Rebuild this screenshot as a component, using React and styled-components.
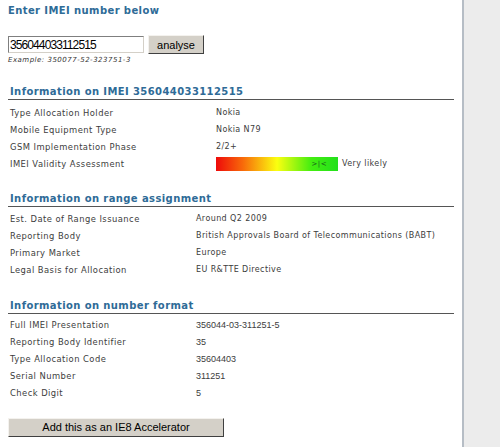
import React from "react";
import styled, { createGlobalStyle } from "styled-components";

const Global = createGlobalStyle`
  html, body { margin: 0; padding: 0; background: #fff; }
  body { width: 500px; height: 447px; overflow: hidden; }
`;

const Page = styled.div`
  display: flex;
  width: 500px;
  height: 447px;
`;

const Main = styled.div`
  width: 446px;
  padding: 0 8px;
  background: #fff;
  font-family: "DejaVu Sans", Verdana, sans-serif;
`;

const Side = styled.div`
  flex: 1;
  border-left: 2px solid #b6bdc5;
  background: #ececec;
`;

const Title = styled.div`
  margin-top: 5px;
  height: 14px;
  font-size: 10px;
  font-weight: bold;
  letter-spacing: 0.4px;
  color: #2e6b97;
`;

const Form = styled.div`
  display: flex;
  align-items: center;
  gap: 4px;
  margin-top: 16px;
`;

const Input = styled.input`
  box-sizing: border-box;
  width: 136px;
  height: 17px;
  padding: 0 1px;
  border: 1px solid #7f7f7f;
  border-right-color: #d4d0c8;
  border-bottom-color: #d4d0c8;
  font-family: "Liberation Sans", Arial, sans-serif;
  font-size: 12px;
  letter-spacing: -0.9px;
  color: #000;
  outline: none;
`;

const Button = styled.button`
  box-sizing: border-box;
  width: ${(p) => p.$w}px;
  height: ${(p) => p.$h}px;
  padding: 0;
  background: #d4d0c8;
  border: 1px solid;
  border-color: #f4f2ee #404040 #404040 #f4f2ee;
  font-family: "Liberation Sans", Arial, sans-serif;
  font-size: 11px;
  color: #000;
`;

const Example = styled.div`
  margin-top: 2px;
  font-size: 7px;
  font-style: italic;
  letter-spacing: 0.5px;
  color: #333;
`;

const Section = styled.div`
  margin-top: ${(p) => p.$top}px;
`;

const SectionHead = styled.div`
  padding-left: 2px;
  padding-bottom: 1px;
  border-bottom: 1px solid #555;
  font-size: 10px;
  font-weight: bold;
  letter-spacing: 0.4px;
  color: #2e6b97;
  line-height: 13px;
`;

const Rows = styled.div`
  margin-top: ${(p) => p.$gap}px;
  padding-left: 2px;
`;

const Row = styled.div`
  display: grid;
  grid-template-columns: ${(p) => p.$col}px 1fr;
  align-items: center;
  height: 17px;
  font-size: 8.4px;
  letter-spacing: 0.45px;
  color: #3c3c3c;
`;

const Value = styled.div`
  display: flex;
  align-items: center;
  gap: 4px;
  font-family: ${(p) => (p.$arial ? '"Liberation Sans", Arial, sans-serif' : "inherit")};
  font-size: ${(p) => (p.$arial ? "9px" : "8px")};
  letter-spacing: ${(p) => (p.$arial ? "0" : "0.4px")};
`;

const Bar = styled.div`
  display: flex;
  align-items: center;
  justify-content: flex-end;
  box-sizing: border-box;
  width: 122px;
  height: 14px;
  padding-right: 11px;
  background: linear-gradient(to right, #ee0a0a 0%, #f86a0a 22%, #fbff10 50%, #44ee10 78%, #22e01c 100%);
  font-size: 7px;
  letter-spacing: 0.5px;
  color: #1a5a1a;
`;

const Footer = styled.div`
  margin-top: 15px;
`;

const rows1 = [
  ["Type Allocation Holder", "Nokia"],
  ["Mobile Equipment Type", "Nokia N79"],
  ["GSM Implementation Phase", "2/2+"],
];
const rows2 = [
  ["Est. Date of Range Issuance", "Around Q2 2009"],
  ["Reporting Body", "British Approvals Board of Telecommunications (BABT)"],
  ["Primary Market", "Europe"],
  ["Legal Basis for Allocation", "EU R&TTE Directive"],
];
const rows3 = [
  ["Full IMEI Presentation", "356044-03-311251-5"],
  ["Reporting Body Identifier", "35"],
  ["Type Allocation Code", "35604403"],
  ["Serial Number", "311251"],
  ["Check Digit", "5"],
];

export default function App() {
  return (
    <>
      <Global />
      <Page>
        <Main>
          <Title>Enter IMEI number below</Title>
          <Form>
            <Input defaultValue="356044033112515" />
            <Button $w={56} $h={19}>analyse</Button>
          </Form>
          <Example>Example: 350077-52-323751-3</Example>

          <Section $top={21}>
            <SectionHead>Information on IMEI 356044033112515</SectionHead>
            <Rows $gap={4}>
              {rows1.map(([k, v]) => (
                <Row key={k} $col={206}>
                  <div>{k}</div>
                  <Value>{v}</Value>
                </Row>
              ))}
              <Row $col={206}>
                <div>IMEI Validity Assessment</div>
                <Value>
                  <Bar>&gt;|&lt;</Bar>
                  <span>Very likely</span>
                </Value>
              </Row>
            </Rows>
          </Section>

          <Section $top={20}>
            <SectionHead>Information on range assignment</SectionHead>
            <Rows $gap={3}>
              {rows2.map(([k, v]) => (
                <Row key={k} $col={186}>
                  <div>{k}</div>
                  <Value>{v}</Value>
                </Row>
              ))}
            </Rows>
          </Section>

          <Section $top={21}>
            <SectionHead>Information on number format</SectionHead>
            <Rows $gap={2}>
              {rows3.map(([k, v]) => (
                <Row key={k} $col={186}>
                  <div>{k}</div>
                  <Value $arial>{v}</Value>
                </Row>
              ))}
            </Rows>
          </Section>

          <Footer>
            <Button $w={216} $h={19}>Add this as an IE8 Accelerator</Button>
          </Footer>
        </Main>
        <Side />
      </Page>
    </>
  );
}
